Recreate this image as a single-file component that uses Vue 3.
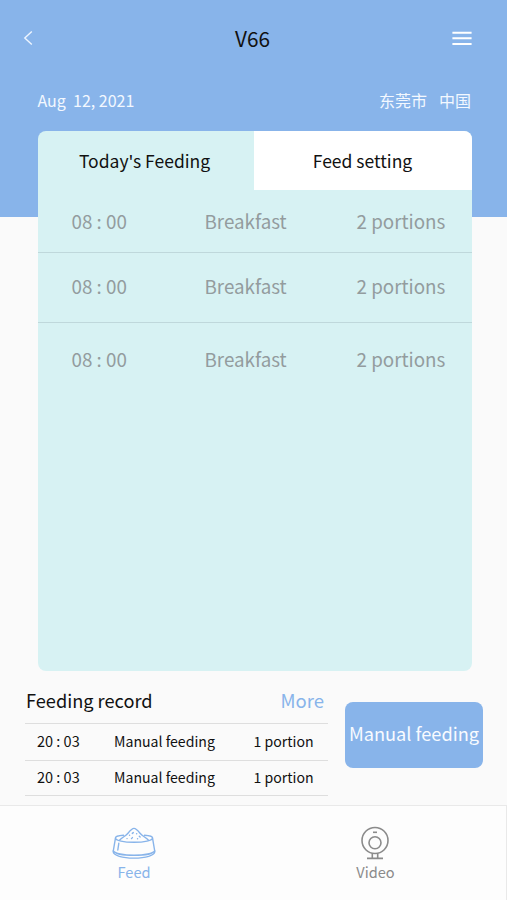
<script setup>
const meals = [
  { id: 1, time: '08 : 00', name: 'Breakfast', amount: '2 portions' },
  { id: 2, time: '08 : 00', name: 'Breakfast', amount: '2 portions' },
  { id: 3, time: '08 : 00', name: 'Breakfast', amount: '2 portions' },
]
const records = [
  { id: 1, time: '20 : 03', name: 'Manual feeding', amount: '1 portion' },
  { id: 2, time: '20 : 03', name: 'Manual feeding', amount: '1 portion' },
]
</script>

<template>
  <div class="page">
    <header class="hero">
      <div class="bar">
        <svg class="back" width="12" height="18" viewBox="0 0 12 18" fill="none" stroke="#eef5ff" stroke-width="1.4">
          <path d="M9.8 2.4 2.8 9l7 6.6" />
        </svg>
        <h1 class="title">V66</h1>
        <svg class="menu" width="20" height="16" viewBox="0 0 20 16" fill="none" stroke="#fff" stroke-width="2">
          <path d="M0.4 2.7h19.2M0.4 8.3h19.2M0.4 13.9h19.2" />
        </svg>
      </div>
      <div class="meta">
        <span class="date">Aug&nbsp; 12, 2021</span>
        <span class="place"><span>东莞市</span><span>中国</span></span>
      </div>
    </header>

    <section class="card">
      <div class="tabs">
        <div class="tab">Today's Feeding</div>
        <div class="tab plain">Feed setting</div>
      </div>
      <div v-for="m in meals" :key="m.id" class="meal">
        <span>{{ m.time }}</span>
        <span>{{ m.name }}</span>
        <span>{{ m.amount }}</span>
      </div>
    </section>

    <section class="bottom">
      <div class="history">
        <div class="history-head">
          <span class="history-title">Feeding record</span>
          <span class="more">More</span>
        </div>
        <div v-for="r in records" :key="r.id" class="record">
          <span class="record-time">{{ r.time }}</span>
          <span>{{ r.name }}</span>
          <span>{{ r.amount }}</span>
        </div>
      </div>
      <button class="feed-now">Manual feeding</button>
    </section>

    <nav class="nav">
      <div class="nav-item active">
        <svg width="44" height="34" viewBox="0 0 44 34" fill="none" stroke="currentColor" stroke-width="1.4" stroke-linecap="round" stroke-linejoin="round">
          <path d="M11.5 9.3C7 9.6 3.5 10.4 3.5 11.9c0 2.6 8.3 4.4 18.500 4.400s18.500-1.800 18.500-4.400c0-1.500-3.500-2.300-8-2.600" />
          <path d="M7.500 14.200c2.500-2.700 6-4 8.500-7C18.300 4.400 20 2.400 22 2.400s3.700 2 6 4.800c2.500 3 6 4.300 8.500 7" />
          <path d="M3.500 11.900 1.200 25.500c0 4 9.200 6.600 20.800 6.600s20.800-2.600 20.800-6.600L40.500 11.900" />
          <path d="M1.300 24.800c1.500 2.600 10 4.500 20.700 4.500s19.200-1.900 20.700-4.500" />
          <path d="M6.800 17.300 5.800 24" />
          <path d="M17.500 9.200h.1M20.300 7.400l1-.8M24.600 7.800h.1M27.300 10.200l.8.800M20.400 11.600l-.9 1M15 12.600h.1M25.500 12.700h.1" />
        </svg>
        <span>Feed</span>
      </div>
      <div class="nav-item">
        <svg class="camera" width="30" height="34" viewBox="0 0 30 34" fill="none" stroke="currentColor" stroke-width="1.6">
          <circle cx="15" cy="14.5" r="13" />
          <circle cx="15" cy="16.7" r="6" />
          <path d="M13 6.300h4" />
          <path d="M12.300 27.200v5M17.700 27.200v5M7 32.400h16" />
        </svg>
        <span>Video</span>
      </div>
    </nav>
  </div>
</template>

<style>
body {
  margin: 0;
  background: #fafafa;
}
</style>

<style scoped>
.page {
  box-sizing: border-box;
  width: 507px;
  height: 900px;
  display: flex;
  flex-direction: column;
  overflow: hidden;
  background: #fafafa;
  color: #111;
  font-family: "Noto Sans CJK SC", sans-serif;
  white-space: nowrap;
}
.hero {
  height: 216.5px;
  flex: none;
  background: #88b4ea;
}
.bar {
  height: 76px;
  padding: 0 35px 0 22px;
  display: grid;
  grid-template-columns: 60px 1fr 49px;
  align-items: center;
}
.title {
  margin: 0 0 1px;
  font-size: 20.8px;
  line-height: 30px;
  font-weight: 400;
  text-align: center;
}
.menu {
  justify-self: end;
}
.meta {
  display: flex;
  justify-content: space-between;
  padding: 12px 36px 0 37.5px;
  color: #f3f8ff;
  font-size: 16px;
  line-height: 24px;
}
.place {
  display: flex;
  gap: 12px;
}
.card {
  flex: none;
  height: 540px;
  margin: -85.5px 35.5px 0 37.5px;
  border-radius: 8px;
  overflow: hidden;
  background: #d7f2f3;
}
.tabs {
  display: grid;
  grid-template-columns: 216px 1fr;
  height: 58px;
}
.tab {
  font-size: 17.5px;
  line-height: 59px;
  text-align: center;
}
.tab:first-child {
  padding-right: 2px;
}
.plain {
  background: #fff;
}
.meal {
  box-sizing: border-box;
  height: 70px;
  padding-left: 34px;
  display: grid;
  grid-template-columns: 133px 152px 1fr;
  align-items: center;
  font-size: 18.8px;
  line-height: 28px;
  color: #939c9e;
  border-bottom: 1px solid #bfd8db;
}
.meal:nth-child(2) {
  height: 64px;
}
.meal:nth-child(3) {
  padding-bottom: 3px;
}
.meal:last-child {
  height: 72px;
  border-bottom: none;
}
.bottom {
  height: 134px;
  flex: none;
  display: flex;
  gap: 17px;
  padding-left: 25px;
}
.history {
  width: 303px;
}
.history-head {
  height: 52px;
  display: flex;
  justify-content: space-between;
  padding: 0 4px 0 1px;
  line-height: 58px;
  font-size: 18.2px;
  border-bottom: 1px solid #dedede;
}
.more {
  font-size: 18.5px;
  color: #88b4ea;
}
.record {
  box-sizing: border-box;
  height: 37px;
  padding: 0 0 2px 12px;
  display: grid;
  grid-template-columns: 77px 139.5px 1fr;
  align-items: center;
  font-size: 14.1px;
  line-height: 20px;
  border-bottom: 1px solid #dedede;
}
.record-time {
  font-size: 14.5px;
}
.record:last-child {
  height: 35px;
}
.feed-now {
  width: 138px;
  height: 66px;
  margin: 31px 0 0;
  padding: 0 0 5px;
  border: none;
  border-radius: 8px;
  background: #88b4ea;
  color: #f8fbff;
  font-family: inherit;
  font-size: 18.2px;
}
.nav {
  box-sizing: border-box;
  flex: 1;
  display: grid;
  grid-template-columns: 268px 215px;
  border: 1px solid #e9e9e9;
  border-left: none;
  border-bottom: none;
  background: #fdfdfd;
}
.nav-item {
  display: flex;
  flex-direction: column;
  align-items: center;
  padding-top: 20px;
  gap: 1px;
  font-size: 14.6px;
  line-height: 22px;
  color: #8b8b8b;
}
.camera {
  margin-right: 1px;
}
.active {
  color: #88b4ea;
}
</style>
